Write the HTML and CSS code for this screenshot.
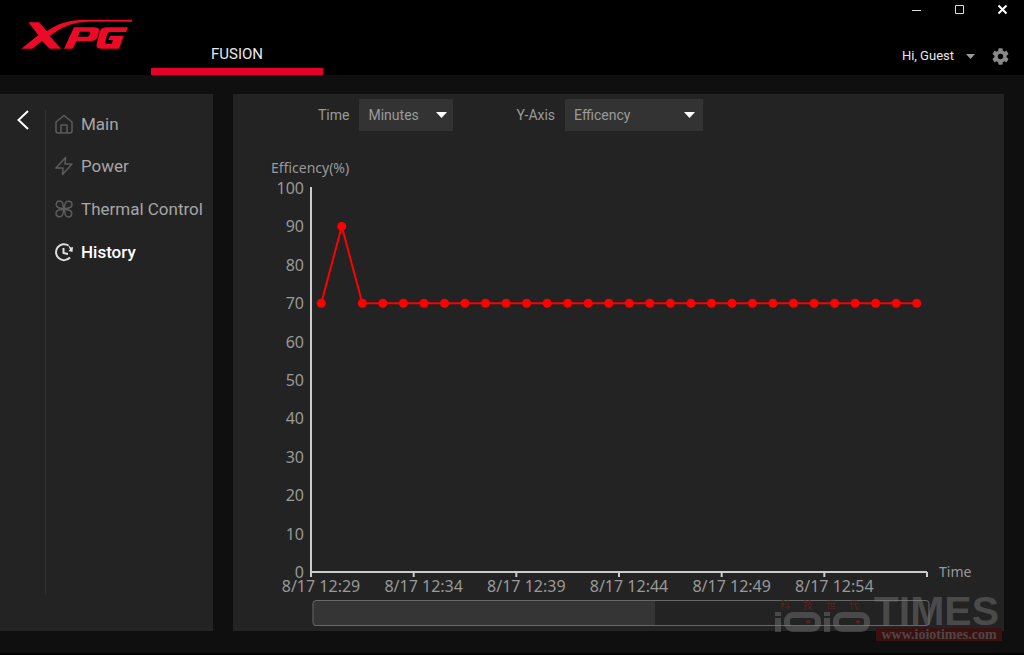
FILE: index.html
```html
<!DOCTYPE html>
<html lang="en">
<head>
<meta charset="utf-8">
<title>XPG Fusion</title>
<link rel="stylesheet" href="styles.css">
</head>
<body>
<div class="app">
  <header class="topbar">
    <svg class="logo" viewBox="60 55 342 96" role="img" aria-label="XPG">
      <path d="M85 68H117L141 95Q185 60 255 60H396V66H262Q202 67 157 104L149 109L183 147H149L126 124L97 147H64L115 106Z"/>
      <path fill-rule="evenodd" d="M222 83H283Q301 84 297 97L292 113Q288 124 274 124H230L218 147H192ZM240 96L233 111H262Q267 111 269 106L271 101Q272 96 267 96Z"/>
      <path d="M318 83H384L378 97H330Q324 97 322 103L315 128Q314 133 320 133H335L339 121H325L330 109H371L357 147H302Q287 147 290 133L298 100Q302 84 318 83Z"/>
    </svg>
    <nav class="tabs"><button class="tab" type="button">FUSION</button></nav>
    <div class="topright">
      <div class="window-controls">
        <button type="button" aria-label="Minimize"><svg viewBox="0 0 11 11"><path d="M1 6.500H10"/></svg></button>
        <button type="button" aria-label="Maximize"><svg viewBox="0 0 11 11"><path d="M1.500 1.500H9.500V9.500H1.500Z"/></svg></button>
        <button type="button" aria-label="Close"><svg class="close" viewBox="0 0 11 11"><path d="M1.500 1.500L9.500 9.500M9.500 1.500L1.500 9.500"/></svg></button>
      </div>
      <div class="account">
        <button class="user" type="button">Hi, Guest<svg class="caret" viewBox="0 0 9 5"><path d="M0 0H9L4.500 5Z"/></svg></button>
        <button class="settings" type="button" aria-label="Settings">
          <svg viewBox="2 2 20 20"><path d="M19.140 12.940c.04-.3.06-.61.06-.94 0-.32-.02-.64-.07-.94l2.030-1.580c.18-.14.23-.41.12-.61l-1.920-3.320c-.12-.22-.37-.29-.59-.22l-2.390.96c-.5-.38-1.030-.7-1.620-.94l-.36-2.540c-.04-.24-.24-.41-.48-.41h-3.840c-.24 0-.43.17-.47.41l-.36 2.540c-.59.24-1.130.57-1.620.94l-2.390-.96c-.22-.08-.47 0-.59.22L2.740 8.870c-.12.21-.08.47.12.61l2.030 1.580c-.05.3-.09.63-.09.94s.02.64.07.94l-2.030 1.580c-.18.14-.23.41-.12.61l1.920 3.320c.12.22.37.29.59.22l2.390-.96c.5.38 1.030.7 1.620.94l.36 2.540c.05.24.24.41.48.41h3.840c.24 0 .44-.17.47-.41l.36-2.540c.59-.24 1.130-.56 1.620-.94l2.390.96c.22.08.47 0 .59-.22l1.920-3.320c.12-.22.07-.47-.12-.61zM12 15.200A3.200 3.200 0 1 1 12 8.800A3.200 3.200 0 0 1 12 15.200z"/></svg>
        </button>
      </div>
    </div>
  </header>

  <div class="body">
    <aside class="sidebar">
      <button class="back" type="button" aria-label="Back"><svg viewBox="0 0 12 20"><path d="M11 1L1.500 10L11 19"/></svg></button>
      <nav class="menu">
        <a href="#main"><svg viewBox="0 0 18 20"><path d="M1 8L9 1.500L17 8V17Q17 19 15 19H3Q1 19 1 17ZM6 19V11H12V19"/></svg>Main</a>
        <a href="#power"><svg viewBox="0 0 18 20"><path d="M10.500 1.500L1 12H8L7.500 18.500L17 8H10Z"/></svg>Power</a>
        <a href="#thermal"><svg viewBox="0 0 18 20"><path d="M9 10C7 9.500 5 9.500 3 8.500C0 7 1 2 4.500 2C8 2 8 5.500 8.200 7Q8.400 9 9 10C9.500 8 9.500 6 10.500 4C12 1 17 2 17 5.500C17 9 13.500 9 12 9.200Q10 9.400 9 10C11 10.500 13 10.500 15 11.500C18 13 17 18 13.500 18C10 18 10 14.500 9.800 13Q9.600 11 9 10C8.500 12 8.500 14 7.500 16C6 19 1 18 1 14.500C1 11 4.500 11 6 10.800Q8 10.600 9 10Z"/></svg>Thermal Control</a>
        <a class="current" href="#history" aria-current="page"><svg viewBox="0 0 18 20"><path d="M13.500 3.500A8 8 0 1 0 15 15.500M8.500 6V11L13 12"/><path class="solid" d="M13 3L16 5.500L18 5L17.500 10L13.500 9L15 7.500Z"/></svg>History</a>
      </nav>
    </aside>

    <main class="panel">
      <form class="filters">
        <label for="time">Time</label>
        <div class="select time-select">
          <select id="time"><option>Minutes</option><option>Hours</option></select>
          <svg viewBox="0 0 11 6"><path d="M0 0H11L5.500 6Z"/></svg>
        </div>
        <label class="second" for="yaxis">Y-Axis</label>
        <div class="select axis-select">
          <select id="yaxis"><option>Efficency</option><option>Temperature</option></select>
          <svg viewBox="0 0 11 6"><path d="M0 0H11L5.500 6Z"/></svg>
        </div>
      </form>
      <svg class="chart" viewBox="0 0 771 500" role="img" aria-label="Efficency over time">
        <text class="title" x="38" y="42">Efficency(%)</text>
        <g id="ylabels" class="ylabels"></g>
        <path class="axis" d="M78 56V441H694"/>
        <g id="xlabels" class="xlabels"></g>
        <text class="title" x="706" y="446">Time</text>
        <rect class="scroll-thumb" x="80" y="470" width="342" height="25"/>
        <rect class="scroll" x="80" y="469.500" width="616" height="25" rx="3"/>
        <g id="series" class="series"></g>
      </svg>
    </main>
  </div>
</div>

<div class="watermark">
  <div class="wm-left">
    <span class="wm-cjk" lang="zh-Hant"><i>科</i><i>技</i><i>世</i><i>代</i></span>
    <svg class="wm-logo" viewBox="0 0 95 21" role="img" aria-label="ioio">
      <path class="bars" d="M0 0H6V4H0ZM0 6H6V20H0ZM49 0H55V4H49ZM49 6H55V20H49Z"/>
      <rect x="12" y="3" width="31" height="14" rx="6"/>
      <rect x="61" y="3" width="31" height="14" rx="6"/>
      <circle cx="33" cy="10" r="2"/><circle cx="83" cy="10" r="2"/>
    </svg>
  </div>
  <div class="wm-right">
    <span class="wm-times">TIMES</span>
    <span class="wm-url">www.ioiotimes.com</span>
  </div>
</div>
<script src="chart.js"></script>
</body>
</html>
```
FILE: styles.css
```css
* { box-sizing: border-box; }
body {
  margin: 0;
  background: #0f0f0f;
  color: #a6a6a6;
  font-family: Roboto, "Liberation Sans", sans-serif;
}
button { border: 0; padding: 0; background: none; color: inherit; font: inherit; }
svg { display: block; }

.app {
  min-height: 100vh;
  display: flex;
  flex-direction: column;
  border-bottom: 2px solid #040002;
}

.topbar { display: flex; height: 75px; background: #000; }
.logo { width: 114px; height: 32px; margin: 18px 17px 0 20px; fill: #ec0a26; }
.tabs { display: flex; }
.tab {
  width: 172px;
  height: 75px;
  padding-top: 40px;
  border-bottom: 7px solid #e6002b;
  color: #e8e8e8;
  font-size: 15px;
  line-height: 28px;
}
.topright { margin-left: auto; display: flex; flex-direction: column; }
.window-controls { display: flex; justify-content: flex-end; }
.window-controls button { width: 43px; height: 19px; display: grid; place-items: center; }
.window-controls svg { width: 11px; height: 11px; fill: none; stroke: #ddd; }
.window-controls .close { stroke: #fff; stroke-width: 2; }
.account { display: flex; align-items: center; justify-content: flex-end; gap: 17px; padding: 25px 15px 0 0; }
.user { display: flex; align-items: center; gap: 12px; color: #e8e8e8; font-size: 13px; line-height: 24px; }
.caret { width: 9px; height: 5px; fill: #999; }
.settings svg { width: 17px; height: 17px; fill: #888; }

.body { flex: 1; display: flex; gap: 20px; padding: 19px 20px 22px 0; }
.sidebar { width: 213px; flex: none; display: flex; background: #232323; }
.back { width: 45px; height: 52px; display: grid; place-items: center; }
.back svg { width: 12px; height: 20px; fill: none; stroke: #fff; stroke-width: 2; }
.menu { flex: 1; margin: 16px 0 36px; border-left: 1px solid #303030; }
.menu a {
  display: flex;
  align-items: center;
  gap: 8px;
  height: 43px;
  padding-left: 9px;
  color: #a6a6a6;
  font-size: 17px;
  text-decoration: none;
  white-space: nowrap;
}
.menu a:first-child { height: 27px; margin-bottom: 7px; }
.menu svg { width: 18px; height: 20px; fill: none; stroke: #5c5c5c; stroke-width: 1.500; stroke-linejoin: round; }
.menu .current { color: #fff; font-weight: 500; }
.menu .current svg { stroke: #ddd; stroke-width: 2; }
.menu .solid { fill: #ddd; stroke: none; }

.panel { flex: 1; min-width: 0; background: #232323; }
.filters { display: flex; align-items: center; padding: 5px 0 0 85px; font-size: 14px; }
.filters label { color: #9a9a9a; margin-right: 10px; }
.filters .second { margin-left: 63px; }
.select { position: relative; }
.select select {
  width: 100%;
  height: 32px;
  padding: 0 9px;
  border: 0;
  border-radius: 0;
  appearance: none;
  background: #333;
  color: #9a9a9a;
  font: inherit;
}
.select svg { position: absolute; right: 6px; top: 13px; width: 11px; height: 6px; fill: #fff; pointer-events: none; }
.time-select { width: 94px; }
.axis-select { width: 138px; }
.axis-select svg { right: 8px; }

.chart { width: 100%; height: auto; font-family: "Noto Sans", sans-serif; fill: #999; }
.chart .title { font-size: 14px; }
.ylabels { font-size: 16px; text-anchor: end; }
.xlabels { font-size: 16px; text-anchor: middle; }
.axis, .xlabels path { fill: none; stroke: #ccc; stroke-width: 2; }
.scroll { fill: none; stroke: #686868; }
.scroll-thumb { fill: #353535; }
.series polyline { fill: none; stroke: #f00; stroke-width: 2; }
.series circle { fill: #f00; }

.watermark { position: absolute; right: 22px; bottom: 14px; display: flex; gap: 6px; color: rgba(125, 125, 125, 0.44); }
.wm-left { display: flex; flex-direction: column; padding-top: 4px; }
.wm-cjk { display: flex; gap: 13px; padding-left: 5px; color: #5a2222; font: 10px/14px "Noto Sans CJK TC", sans-serif; }
.wm-cjk i { font-style: normal; }
.wm-logo { width: 95px; height: 21px; }
.wm-logo .bars { fill: currentColor; }
.wm-logo rect { fill: none; stroke: currentColor; stroke-width: 6; }
.wm-logo circle { fill: #5a2222; }
.wm-right { width: 126px; display: flex; flex-direction: column; align-items: flex-end; }
.wm-times { padding-right: 3px; font: bold 41px/34px "Liberation Sans", sans-serif; }
.wm-url { width: 126px; background: #3b1011; color: #4d4646; font: bold 14px/13px "Liberation Serif", serif; text-align: center; }
```
FILE: chart.js
```js
const NS = "http://www.w3.org/2000/svg";
function add(parent, tag, attrs, text) {
  const el = document.createElementNS(NS, tag);
  for (const key in attrs) el.setAttribute(key, attrs[key]);
  if (text !== undefined) el.textContent = text;
  parent.appendChild(el);
}

const left = 78;
const bottom = 441;
const step = 616 / 30;
const yFor = value => bottom - value * 3.84;

const ylabels = document.getElementById("ylabels");
for (let v = 0; v <= 100; v += 10) add(ylabels, "text", { x: 71, y: yFor(v) + 6 }, v);

const xlabels = document.getElementById("xlabels");
["8/17 12:29", "8/17 12:34", "8/17 12:39", "8/17 12:44", "8/17 12:49", "8/17 12:54"].forEach((label, i) => {
  const x = left + i * 5 * step;
  add(xlabels, "path", { d: `M${x} ${bottom}v5` });
  add(xlabels, "text", { x: x + 10, y: 461 }, label);
});
add(xlabels, "path", { d: `M${left + 616} ${bottom}v5` });

const values = Array(30).fill(70);
values[1] = 90;
const points = values.map((v, i) => [left + (i + 0.5) * step, yFor(v)]);
const series = document.getElementById("series");
add(series, "polyline", { points: points.join(" ") });
points.forEach(([cx, cy]) => add(series, "circle", { cx, cy, r: 4.5 }));
```
